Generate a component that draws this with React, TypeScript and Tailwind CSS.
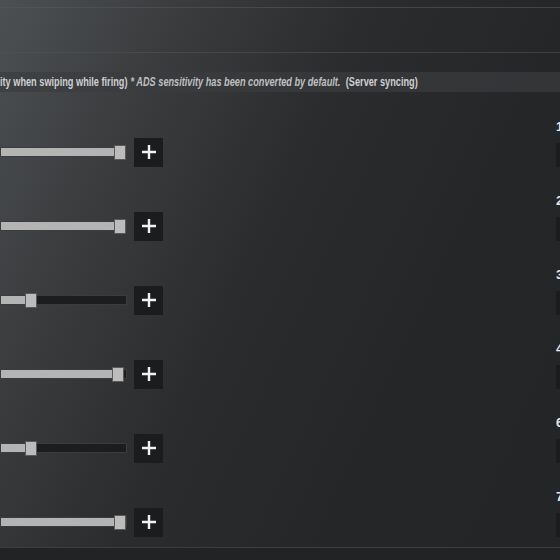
import React from "react";

const rows = [
  { pct: 100, label: "1" },
  { pct: 100, label: "2" },
  { pct: 22, label: "3" },
  { pct: 98, label: "4" },
  { pct: 22, label: "6" },
  { pct: 100, label: "7" },
];

function Slider({ pct }: { pct: number }) {
  const thumbLeft = Math.round((pct / 100) * 114);
  return (
    <div className="relative w-[127px] h-[15px] flex items-center">
      <div className="w-full h-[10px] border border-[#3b3c3d] bg-[#1c1d1e]">
        <div className="h-full bg-[#b4b4b4]" style={{ width: thumbLeft + 4 }} />
      </div>
      <div
        className="absolute top-0 w-[12px] h-[15px] bg-[#bcbcbc] border border-[#5a5a5a]"
        style={{ left: thumbLeft }}
      />
    </div>
  );
}

export default function App() {
  return (
    <div
      className="w-[560px] h-[560px] overflow-hidden flex flex-col bg-[linear-gradient(115deg,#4d5053_0%,#3a3c3e_22%,#2b2c2d_45%,#252627_70%,#242526_100%)]"
      style={{ fontFamily: '"Liberation Sans",sans-serif' }}
    >
      {/* header lines */}
      <div className="h-[72px] shrink-0 flex flex-col">
        <div className="h-[7px] shrink-0" />
        <div className="h-px shrink-0 bg-[#55585b]/60" />
        <div className="h-[44px] shrink-0" />
        <div className="h-px shrink-0 bg-[#505356]/60" />
      </div>
      {/* info bar */}
      <div className="h-[20px] shrink-0 bg-[#3a3c3e]/70 flex items-center overflow-hidden">
        <div className="flex items-center whitespace-nowrap text-[12px] font-semibold text-[#cfd0d1] origin-left scale-x-[0.765]">
          <span>ity when swiping while firing)</span>
          <span className="ml-[4px] italic text-[#bfc0c1]">* ADS sensitivity has been converted by default.</span>
          <span className="ml-[7px]">(Server syncing)</span>
        </div>
      </div>
      {/* rows */}
      <div className="pt-[35px] shrink-0 flex flex-col gap-[24px]">
        {rows.map((r, i) => (
          <div key={i} className="h-[50px] shrink-0 flex items-center">
            <Slider pct={r.pct} />
            <div className="ml-[7px] w-[29px] h-[29px] bg-[#1b1c1d] flex items-center justify-center">
              <svg width="16" height="16" viewBox="0 0 16 16">
                <path d="M8 1v14M1 8h14" stroke="#f2f2f2" strokeWidth="2.4" />
              </svg>
            </div>
            <div className="ml-auto self-start -mt-[7px] w-[4px] shrink-0 flex flex-col">
              <span className="text-[13px] leading-[14px] text-[#e8e8e8] font-bold">{r.label}</span>
              <div className="mt-[9px] w-[20px] h-[24px] bg-[#1b1c1d]" />
            </div>
          </div>
        ))}
      </div>
      <div className="h-px shrink-0 bg-[#3c3d3e]" />
      <div className="flex-1 bg-[#222324]" />
    </div>
  );
}
